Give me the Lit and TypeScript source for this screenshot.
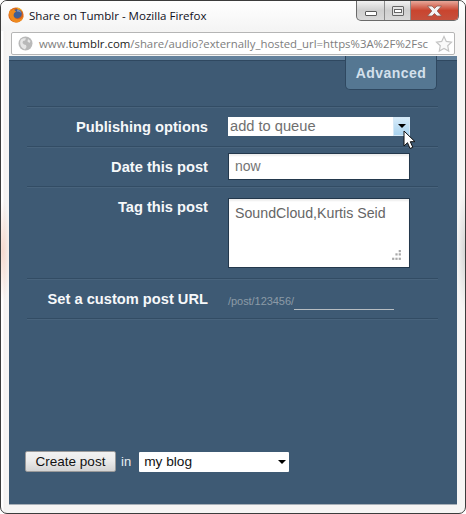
import { LitElement, html, css } from "lit";
import { customElement } from "lit/decorators.js";

@customElement("app-root")
export class AppRoot extends LitElement {
  static styles = css`
    :host { display: block; width: 466px; height: 514px; overflow: hidden; background: #fff; font-family: "Liberation Sans", Arial, sans-serif; }
    .window { position: relative; box-sizing: border-box; width: 466px; height: 514px; border: 1px solid #3c3c3c; border-radius: 7px; background: radial-gradient(ellipse 8px 50px at 2px 250px, #f6d9cf, transparent), radial-gradient(ellipse 8px 60px at 464px 250px, #d5d5d5, transparent), linear-gradient(90deg, #fff 0 2px, #f3f1f0 3px, #f6f5f4 6px); display: flex; flex-direction: column; padding: 0 8px 8px 8px; overflow: hidden; }
    .bar { display: flex; align-items: flex-start; height: 30px; flex: none; background: linear-gradient(#fff, #f4f4f4); margin: 0 -8px; padding: 0 0 0 7px; }
    .logo { margin-top: 6px; flex: none; }
    .title { margin: 6px 0 0 5px; font: 11.55px/17px "Open Sans", "Noto Sans", sans-serif; color: #10101c; white-space: nowrap; }
    .controls { margin-left: auto; margin-right: 6px; display: flex; height: 19px; border: 1px solid #6a6a6a; border-top: none; border-radius: 0 0 5px 5px; overflow: hidden; background: linear-gradient(#f2f2f2, #cfcfcf 50%, #d9d9d9); }
    .ctl { width: 27px; display: flex; align-items: center; justify-content: center; border-right: 1px solid #8d8d8d; }
    .ctl.max { width: 25px; }
    .ctl.close { width: 47px; border: none; background: linear-gradient(#e8a89a, #c9452f 50%, #c5503c); }
    .min-i { width: 10px; height: 3px; border: 1px solid #5a5a5a; background: #fff; margin-top: 5px; border-radius: 1px; }
    .max-i { box-sizing: border-box; width: 12px; height: 10px; border: 1px solid #666; border-radius: 1px; background: #e4e4e4; display: flex; align-items: center; justify-content: center; }
    .max-i::after { content: ""; width: 6px; height: 2px; border: 1px solid #666; background: #fff; }
    .addr { flex: none; box-sizing: border-box; height: 23px; margin: 1px 2px 1px 2px; border: 1px solid #b5b5b5; border-radius: 2px; background: #fff; display: flex; align-items: center; padding: 0 1px 0 6px; }
    .url { margin-left: 6px; flex: 1; white-space: nowrap; font: 11.38px/17px "Open Sans", "Noto Sans", sans-serif; color: #7d7d7d; }
    .url b { font-weight: 400; color: #222; }
    .panel { position: relative; flex: 1; background: #3e5a74; border-top: 4px solid #63819c; border-bottom: 1px solid #a8b0b8; margin: 0; display: flex; flex-direction: column; }
    .panel::before { content: ""; display: block; height: 1px; background: #2f4860; flex: none; }
    .tabline { display: flex; justify-content: flex-end; padding-right: 20px; height: 50px; flex: none; margin-top: -5px; }
    .tab { box-sizing: border-box; width: 92px; height: 34px; background: #557792; border: 1px solid #2f4860; border-top: none; border-radius: 0 0 5px 5px; color: #d3e0ec; font-weight: 700; font-size: 14px; letter-spacing: 0.45px; text-align: center; padding-top: 9px; }
    .rows { margin: 0 19px 0 18px; border-top: 1px solid #324c64; box-shadow: inset 0 1px 0 #48637c; }
    .row { display: grid; grid-template-columns: 181px 1fr; column-gap: 20px; border-bottom: 1px solid #324c64; box-shadow: 0 1px 0 #48637c; align-items: center; }
    .row.r1 { height: 39px; }
    .row.r2 { height: 39px; }
    .row.r3 { height: 91px; align-items: start; }
    .row.r4 { height: 39px; }
    .label { text-align: right; color: #f6f8fa; font-weight: 700; font-size: 14.67px; line-height: 16px; }
    .r3 .label { margin-top: 12px; }
    .select { position: relative; box-sizing: border-box; width: 182px; height: 19px; background: #fff; color: #6f6f6f; font-size: 14.67px; line-height: 19px; padding-left: 2px; margin-top: -1px; }
    .arrow { position: absolute; right: 0; top: 0; width: 17px; height: 19px; box-sizing: border-box; border: 1px solid #d5e8f6; background: linear-gradient(#d6ebf9, #a9d3ef); display: flex; justify-content: center; align-items: center; }
    .tri { width: 0; height: 0; border-left: 4px solid transparent; border-right: 4px solid transparent; border-top: 4px solid #000; }
    .input { box-sizing: border-box; width: 182px; height: 27px; background: #fff; border: 1px solid #23384c; color: #747474; font-size: 14px; line-height: 25px; padding-left: 6px; box-shadow: inset 0 2px 2px #eee; margin-top: -1px; }
    .area { position: relative; box-sizing: border-box; width: 182px; height: 70px; margin-top: 11px; background: #fff; border: 1px solid #23384c; color: #666; font-size: 14.2px; line-height: 16px; padding: 6px 6px; box-shadow: inset 0 2px 2px #eee; white-space: nowrap; }
    .grip { position: absolute; right: 7px; bottom: 6px; }
    .slug { display: flex; align-items: flex-end; height: 18px; font-size: 11px; line-height: 15px; color: #8c9aa7; letter-spacing: -0.05px; margin-top: 3px; }
    .line { width: 100px; height: 1px; background: #b7bdc2; margin-bottom: -1px; }
    .foot { display: flex; align-items: center; margin-top: auto; padding: 0 0 32px 16px; }
    .btn { box-sizing: border-box; width: 91px; height: 21px; border: 1px solid #9a9a9a; border-radius: 2px; background: linear-gradient(#f2f2f2, #ebebeb 45%, #d4d4d4); color: #111; font-size: 13.5px; line-height: 19px; text-align: center; }
    .in { margin: 0 8px 0 5px; color: #e9eef2; font-size: 13px; }
    .blog { box-sizing: border-box; width: 150px; height: 20px; background: #fff; color: #111; font-size: 13.7px; line-height: 20px; padding: 0 3px 0 5px; display: flex; align-items: center; justify-content: space-between; border-radius: 1px; }
    .cursor { position: absolute; left: 394px; top: 70px; }
  `;

  render() {
    return html`<div class="window">
      <div class="bar">
        <svg class="logo" width="16" height="16" viewBox="0 0 16 16">
          <circle cx="8" cy="8" r="7.600" fill="#d9641a"/>
          <circle cx="9.200" cy="6.800" r="4.600" fill="#3f5f96"/>
          <path d="M9 2.600c2 0 3.800 1.300 4.300 3.400-1.500-1.300-3-1.800-4.300-1.300Z" fill="#7d94bd"/>
          <path d="M1.200 5C.6 10 3.500 15.500 9 15.400c3.900-.1 6.500-3.200 6.700-6.800-1 2.400-3.400 4-6 3.700C6.800 12 5 9.500 5.800 7c.4-1.200 1.400-2 2.600-2.300C6.800 4 6 3 6.300 1.300 4.800 1.800 3.900 2.900 3.700 4 3.200 3.300 3 2.600 3.100 2 2.200 2.700 1.500 3.800 1.200 5Z" fill="#ee8a1e"/>
          <path d="M9 .6c3 .3 5.700 2.500 6.400 5.700C14.500 4.200 12.600 2.800 10 2.600 9.500 2.200 9.100 1.400 9 .6Z" fill="#f2b02a"/>
        </svg>
        <div class="title">Share on Tumblr - Mozilla Firefox</div>
        <div class="controls">
          <div class="ctl"><div class="min-i"></div></div>
          <div class="ctl max"><div class="max-i"></div></div>
          <div class="ctl close">
            <svg width="17" height="12" viewBox="0 0 17 12"><path d="M1.500 1h4.500l2.500 2.500L11 1h4.500l-4.300 5 4.300 5H11L8.500 8.500 6 11H1.500l4.300-5Z" fill="#f4f4f4" stroke="#8a5a50" stroke-width=".8"/></svg>
          </div>
        </div>
      </div>
      <div class="addr">
        <svg width="15" height="15" viewBox="0 0 15 15">
          <circle cx="7.500" cy="7.500" r="7" fill="#b9b9b9"/>
          <path d="M3 3.500C5 2 7 2 8 2.500L7 4.500 5 5 4.500 7 6 8.500l2 .5 .5 2L7 13.500C5 13 3 11 2.500 9 2 7 2 5 3 3.500ZM10 3l2.500 2-1 2-2-1.500Z" fill="#e6e6e6"/>
        </svg>
        <div class="url">www.<b>tumblr.com</b>/share/audio?externally_hosted_url=https%3A%2F%2Fsc</div>
        <svg width="18" height="18" viewBox="0 0 18 18"><path d="M9 1.500l2.300 4.900 5.200.7-3.800 3.600 1 5.300L9 13.400 4.300 16l1-5.300L1.500 7.100l5.200-.7Z" fill="#fafafa" stroke="#c4c4c4" stroke-width="1.200"/></svg>
      </div>
      <div class="panel">
        <div class="tabline"><div class="tab">Advanced</div></div>
        <div class="rows">
          <div class="row r1">
            <div class="label">Publishing options</div>
            <div class="select">add to queue<div class="arrow"><div class="tri"></div></div></div>
          </div>
          <div class="row r2">
            <div class="label">Date this post</div>
            <div class="input">now</div>
          </div>
          <div class="row r3">
            <div class="label">Tag this post</div>
            <div class="area">SoundCloud,Kurtis Seid
              <svg class="grip" width="11" height="11" viewBox="0 0 10 10" fill="#a9a9a9"><rect x="7" y="0" width="2" height="2"/><rect x="4" y="3" width="2" height="2"/><rect x="7" y="3" width="2" height="2"/><rect x="1" y="7" width="2" height="2"/><rect x="4" y="7" width="2" height="2"/><rect x="7" y="7" width="2" height="2"/></svg>
            </div>
          </div>
          <div class="row r4">
            <div class="label">Set a custom post URL</div>
            <div class="slug"><span>/post/123456/</span><div class="line"></div></div>
          </div>
        </div>
        <div class="foot">
          <div class="btn">Create post</div>
          <div class="in">in</div>
          <div class="blog">my blog<div class="tri"></div></div>
        </div>
        <svg class="cursor" width="13" height="20" viewBox="0 0 13 20"><path d="M1 1v15l3.500-3.300 2.500 5.800 2.800-1.200-2.500-5.600H12Z" fill="#fff" stroke="#111" stroke-width="1"/></svg>
      </div>
    </div>`;
  }
}
